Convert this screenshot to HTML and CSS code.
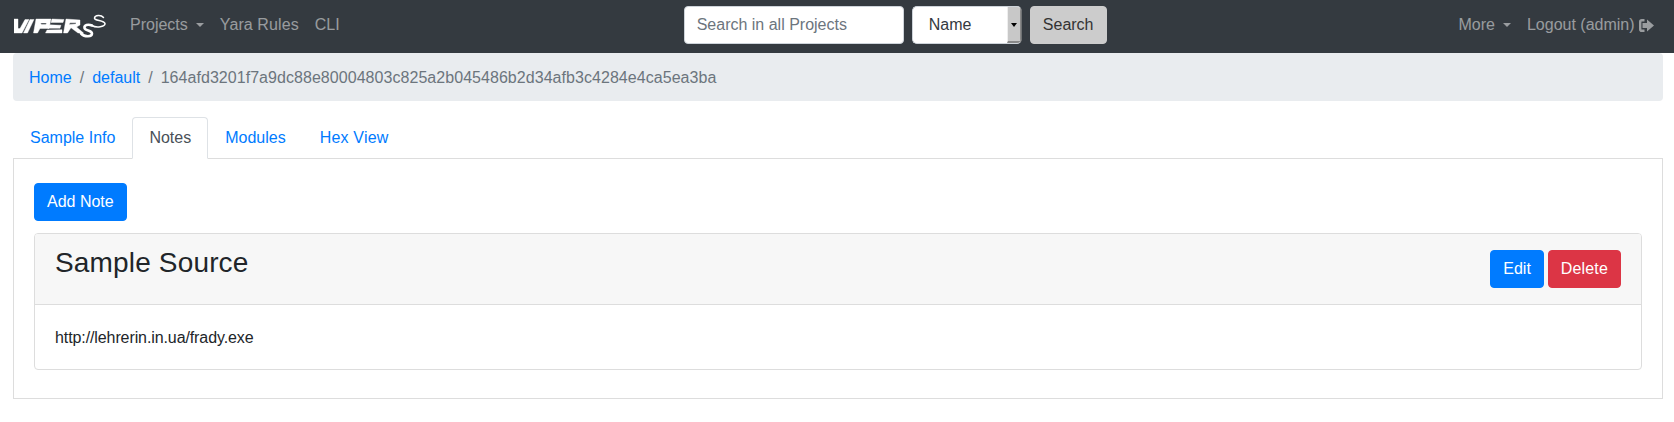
FILE: index.html
```html
<!DOCTYPE html>
<html lang="en">
<head>
<meta charset="utf-8">
<title>Viper</title>
<link rel="stylesheet" href="styles.css">
</head>
<body>
<nav class="navbar">
  <a class="brand" href="#" aria-label="Viper">
    <svg class="logo" viewBox="0 0 92 26" width="92" height="26" aria-hidden="true">
      <g fill="#fff" stroke="#fff" stroke-width="0.400">
        <polygon points="0,6 4,6 4,15.500 6,15.500 11,6.500 15,6.500 8,20 0,20"/>
        <polygon points="16,6.500 20,6.500 13.500,20 9.500,20"/>
        <path fill-rule="evenodd" d="M22 6H37L35 15.500H26L23.500 20H19.500ZM26.500 10L27.500 11.500H32L32.500 10Z"/>
        <polygon points="38,6 50,6.500 49,9.500 37,9.500"/>
        <polygon points="35.500,11.800 47,12.300 46,15.200 34,15.200"/>
        <polygon points="33,17 48,16.700 48,20 31.500,20"/>
        <path fill-rule="evenodd" d="M52 6L66 7V12L62.500 14L69.500 20H64L57 14.800L53.500 20H49.500ZM56 9.800L55 11.500L62 11V9.800Z"/>
      </g>
      <g fill="none" stroke="#fff" stroke-linecap="round">
        <path d="M89.500 4.500C87 1.500 81 2 80.500 5C80 8 90 7 91 10.500C91.500 14 82 15 78 12.500" stroke-width="1.500"/>
        <path d="M78 12.500C74 11 70 12 70.500 15C71 18 78 17 78 20.500C78 24 71 24.500 67 20.500" stroke-width="2.600"/>
      </g>
    </svg>
  </a>
  <ul class="nav-list">
    <li><a class="nav-link caret" href="#">Projects</a></li>
    <li><a class="nav-link nav-wide" href="#">Yara Rules</a></li>
    <li><a class="nav-link" href="#">CLI</a></li>
  </ul>
  <form class="search-form">
    <input class="search-input" type="text" placeholder="Search in all Projects">
    <div class="select-wrap">
      <span class="select-value">Name</span>
      <span class="select-arrow"><i class="arrow-tip"></i></span>
    </div>
    <button class="search-btn" type="button">Search</button>
  </form>
  <ul class="nav-list nav-right">
    <li><a class="nav-link caret" href="#">More</a></li>
    <li>
      <a class="nav-link logout" href="#">Logout (admin)
        <svg class="logout-icon" viewBox="0 0 15 13" width="15" height="13" aria-hidden="true">
          <path d="M5.500 1.200H2.800Q1.200 1.200 1.200 2.800V10.200Q1.200 11.800 2.800 11.800H5.500" fill="none" stroke="currentColor" stroke-width="2.400"/>
          <path d="M3.500 4H8V0.500L15 6.500L8 12.500V9H3.500Z" fill="currentColor"/>
        </svg>
      </a>
    </li>
  </ul>
</nav>
<main class="page">
  <ol class="breadcrumb">
    <li><a href="#">Home</a></li>
    <li class="crumb-sep">/</li>
    <li><a href="#">default</a></li>
    <li class="crumb-sep">/</li>
    <li class="crumb-active">164afd3201f7a9dc88e80004803c825a2b045486b2d34afb3c4284e4ca5ea3ba</li>
  </ol>
  <ul class="tabs">
    <li><a class="tab" href="#">Sample Info</a></li>
    <li><a class="tab tab-active" href="#">Notes</a></li>
    <li><a class="tab" href="#">Modules</a></li>
    <li><a class="tab tab-wide" href="#">Hex View</a></li>
  </ul>
  <section class="pane">
    <button class="btn btn-primary" type="button">Add Note</button>
    <article class="card">
      <header class="card-header">
        <h3 class="card-title">Sample Source</h3>
        <div class="card-actions">
          <button class="btn btn-primary" type="button">Edit</button>
          <button class="btn btn-danger" type="button">Delete</button>
        </div>
      </header>
      <div class="card-body">http://lehrerin.in.ua/frady.exe</div>
    </article>
  </section>
</main>
</body>
</html>
```
FILE: styles.css
```css
* {
  box-sizing: border-box;
}

body {
  margin: 0;
  background: #fff;
  color: #212529;
  font-family: "Liberation Sans", Arial, sans-serif;
  font-size: 16px;
  line-height: 24px;
}

a {
  text-decoration: none;
}

ul,
ol {
  list-style: none;
  margin: 0;
  padding: 0;
}

.navbar {
  display: flex;
  align-items: center;
  height: 53px;
  padding: 0 16px 3px 14px;
  background: #343a40;
}

.brand {
  display: flex;
  margin: 2px 16px 0 0;
}

.logo {
  display: block;
}

.nav-list {
  display: flex;
}

.nav-right {
  margin-left: auto;
}

.nav-link {
  display: block;
  padding: 8px;
  color: rgba(255, 255, 255, 0.5);
}

.nav-wide {
  letter-spacing: 0.1px;
}

.caret::after {
  content: "";
  display: inline-block;
  margin-left: 8px;
  vertical-align: 3px;
  border-top: 4.8px solid currentColor;
  border-left: 4.8px solid transparent;
  border-right: 4.8px solid transparent;
}

.logout {
  padding-right: 4px;
}

.logout-icon {
  vertical-align: -1.5px;
}

.search-form {
  display: flex;
  align-items: center;
  margin-left: 336px;
}

.search-input {
  width: 220px;
  height: 38px;
  padding: 6px 12px;
  border: 1px solid #ced4da;
  border-radius: 4px;
  background: #fff;
  font: inherit;
  color: #495057;
}

.search-input::placeholder {
  color: #6c757d;
  opacity: 1;
}

.select-wrap {
  display: flex;
  width: 110px;
  height: 38px;
  margin-left: 8px;
  border-radius: 5px;
  overflow: hidden;
  background: #fff;
  border: 1px solid #ced4da;
  border-right-color: #6f7274;
}

.select-value {
  flex: 1;
  padding: 6px 0 6px 16px;
  color: #343a40;
}

.select-arrow {
  display: flex;
  align-items: center;
  justify-content: center;
  width: 14px;
  background: #c8c8c8;
  border-left: 1px solid #eee;
  border-bottom: 2px solid #888;
  border-right: 1px solid #888;
}

.arrow-tip {
  display: block;
  margin-top: 1px;
  border-top: 4px solid #000;
  border-left: 3px solid transparent;
  border-right: 3px solid transparent;
}

.search-btn {
  width: 77px;
  height: 38px;
  margin-left: 8px;
  border: 1px solid #ccc;
  border-radius: 4px;
  background: #ccc;
  color: #333;
  font: inherit;
}

.page {
  padding: 0 11px 0 13px;
}

.breadcrumb {
  display: flex;
  height: 48px;
  margin-bottom: 16px;
  padding: 13px 16px 11px;
  border-radius: 4px;
  background: #e9ecef;
}

.breadcrumb a,
.tab {
  color: #007bff;
}

.crumb-sep {
  padding: 0 8px;
  color: #6c757d;
}

.crumb-active {
  color: #6c757d;
  letter-spacing: 0.05px;
}

.tabs {
  display: flex;
  position: relative;
  z-index: 1;
  margin-bottom: -1px;
}

.tab {
  display: block;
  padding: 8px 16px;
  border: 1px solid transparent;
  border-radius: 4px 4px 0 0;
}

.tab-active {
  border-color: #dee2e6 #dee2e6 #fff;
  background: #fff;
  color: #495057;
}

.tab-wide {
  letter-spacing: 0.2px;
}

.pane {
  padding: 24px 20px 28px;
  border: 1px solid #ddd;
}

.btn {
  height: 38px;
  padding: 6px 12px;
  border: 1px solid transparent;
  border-radius: 4px;
  color: #fff;
  font: inherit;
}

.btn-primary {
  border-color: #007bff;
  background: #007bff;
}

.btn-danger {
  border-color: #dc3545;
  background: #dc3545;
  letter-spacing: 0.15px;
}

.card {
  margin-top: 12px;
  border: 1px solid #ddd;
  border-radius: 4px;
}

.card-header {
  display: flex;
  justify-content: space-between;
  align-items: flex-start;
  padding: 12px 20px;
  background: #f7f7f7;
  border-bottom: 1px solid #ddd;
  border-radius: 3px 3px 0 0;
}

.card-title {
  margin: 0;
  font-size: 28px;
  font-weight: 400;
  line-height: 33.6px;
  letter-spacing: 0.16px;
}

.card-actions {
  display: flex;
  gap: 4px;
  margin: 4px 0;
}

.card-body {
  padding: 21px 20px 19px;
  letter-spacing: -0.1px;
}
```
